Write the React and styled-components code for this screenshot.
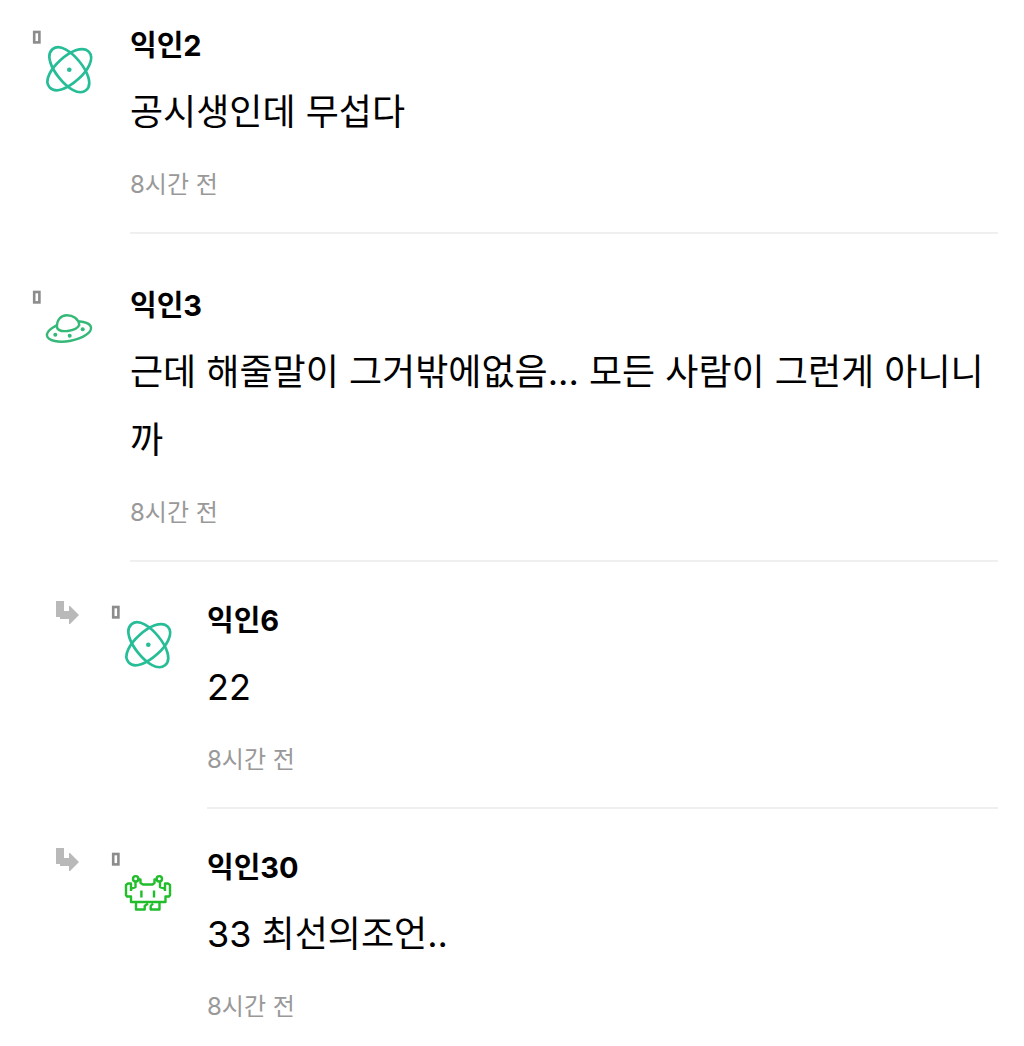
import styled, { createGlobalStyle } from "styled-components";

const comments = [
  { id: 1, name: "익인2", text: "공시생인데 무섭다", time: "8시간 전", icon: "atom" },
  {
    id: 2,
    name: "익인3",
    text: "근데 해줄말이 그거밖에없음... 모든 사람이 그런게 아니니까",
    time: "8시간 전",
    icon: "ufo",
  },
  { id: 3, name: "익인6", text: "22", time: "8시간 전", icon: "atom", reply: true },
  { id: 4, name: "익인30", text: "33 최선의조언..", time: "8시간 전", icon: "alien", reply: true },
];

const orbit = "M-26.5 0C-26.5 -9.5 -12 -13 0 -13S26.5 -9.5 26.5 0S12 13 0 13S-26.5 9.5 -26.5 0Z";

function Atom() {
  return (
    <g transform="translate(37.3 39.7)" fill="none" stroke="#26bd97" strokeWidth="2.7">
      <path d={orbit} transform="rotate(-42)" />
      <path d={orbit} transform="rotate(51)" />
      <circle r="2.3" fill="#26bd97" stroke="none" />
    </g>
  );
}
function Ufo() {
  return (
    <g fill="none" stroke="#35b878" strokeWidth="2.4">
      <ellipse cx="37" cy="41.5" rx="22.4" ry="9.4" transform="rotate(-11 37 41.5)" />
      <path
        d="M25 37.5C24.5 30 29 25.2 34.8 25.2C41 25.2 46.5 28.5 47.3 35C44 41.5 27 43.5 25 37.5Z"
        fill="#fff"
      />
      <g fill="#35b878" stroke="none">
        <circle cx="23.3" cy="44.7" r="2" />
        <circle cx="37.7" cy="45.7" r="2" />
        <circle cx="50.7" cy="39.3" r="2" />
      </g>
    </g>
  );
}
function Alien() {
  return (
    <g fill="none" stroke="#21bd2b" strokeWidth="2.4" strokeLinejoin="round">
      <path d="M20 39V31.5H17L15 33V43L16 44.5H20V50H54.5V44.5H58L59 43V33L57 31.5H54V39" />
      <path d="M20 36.5L24.5 35V29.5M54 36.5L49 35V29.5" />
      <path d="M26.5 27.5H29.5V31L32 32.5H41.5L43.5 31V27.5H46.5" />
      <circle cx="24.7" cy="26.8" r="2.7" />
      <circle cx="48.3" cy="26.8" r="2.7" />
      <path d="M30.4 38.5V45.5M43 38.5V45.5" />
      <path d="M25 50V57.5H33.7V54L37 51.5M48.5 50V57.5H39.7V54L42 51.5" />
    </g>
  );
}
const icons = { atom: Atom, ufo: Ufo, alien: Alien };

function ReplyArrow() {
  return (
    <Arrow viewBox="0 0 24 24" aria-hidden="true">
      <path d="M0 0H8V10H13V5H14L23 14L14 23H13V18H4V16H0Z" fill="#b9b9b9" />
    </Arrow>
  );
}
function Comment({ name, text, time, icon, reply }) {
  const Icon = icons[icon];
  return (
    <Item $reply={reply}>
      {reply && <ReplyArrow />}
      <Avatar viewBox="0 0 64 66" aria-hidden="true">
        <rect x="2.2" y="2" width="5.2" height="10.4" fill="none" stroke="#8c8c8c" strokeWidth="2.6" />
        <Icon />
      </Avatar>
      <Body $reply={reply}>
        <Name>{name}</Name>
        <Text>{text}</Text>
        <Time>{time}</Time>
      </Body>
    </Item>
  );
}
export default function App() {
  return (
    <>
      <GlobalStyle />
      <List>
        {comments.map((comment) => (
          <Comment key={comment.id} {...comment} />
        ))}
      </List>
    </>
  );
}

const GlobalStyle = createGlobalStyle`
  * {
    box-sizing: border-box;
  }
  body {
    margin: 0;
    background: #fff;
    color: #000;
    font-family: Inter, "Noto Sans CJK KR", sans-serif;
  }
`;
const List = styled.ul`
  list-style: none;
  margin: 0;
  padding: 0 26px 0 32px;
  overflow: hidden;
`;
const Item = styled.li`
  display: flex;
  align-items: flex-start;
  padding-top: ${({ $reply }) => ($reply ? "41px" : "54px")};
  padding-left: ${({ $reply }) => ($reply ? "24px" : "0")};
  &:first-child {
    padding-top: 28px;
  }
`;
const Arrow = styled.svg`
  flex: none;
  width: 24px;
  height: 24px;
  margin: -2px 31px 0 0;
`;
const Avatar = styled.svg`
  flex: none;
  width: 64px;
  height: 66px;
  margin-top: 2px;
`;
const Body = styled.article`
  flex: 1;
  min-width: 0;
  margin-left: ${({ $reply }) => ($reply ? "32px" : "34px")};
  padding-bottom: 30px;
  border-bottom: 2px solid #efefef;
  ${Item}:last-child & {
    padding-bottom: 0;
    border-bottom: 0;
  }
`;
const Name = styled.h2`
  margin: 0 0 14px;
  font-size: 29px;
  font-weight: 700;
  line-height: 36px;
`;
const Text = styled.p`
  margin: 0 0 22px;
  font-size: 36px;
  line-height: 68px;
  word-break: break-all;
`;
const Time = styled.time`
  display: block;
  color: #999;
  font-size: 24px;
  font-weight: 400;
  line-height: 34px;
`;
